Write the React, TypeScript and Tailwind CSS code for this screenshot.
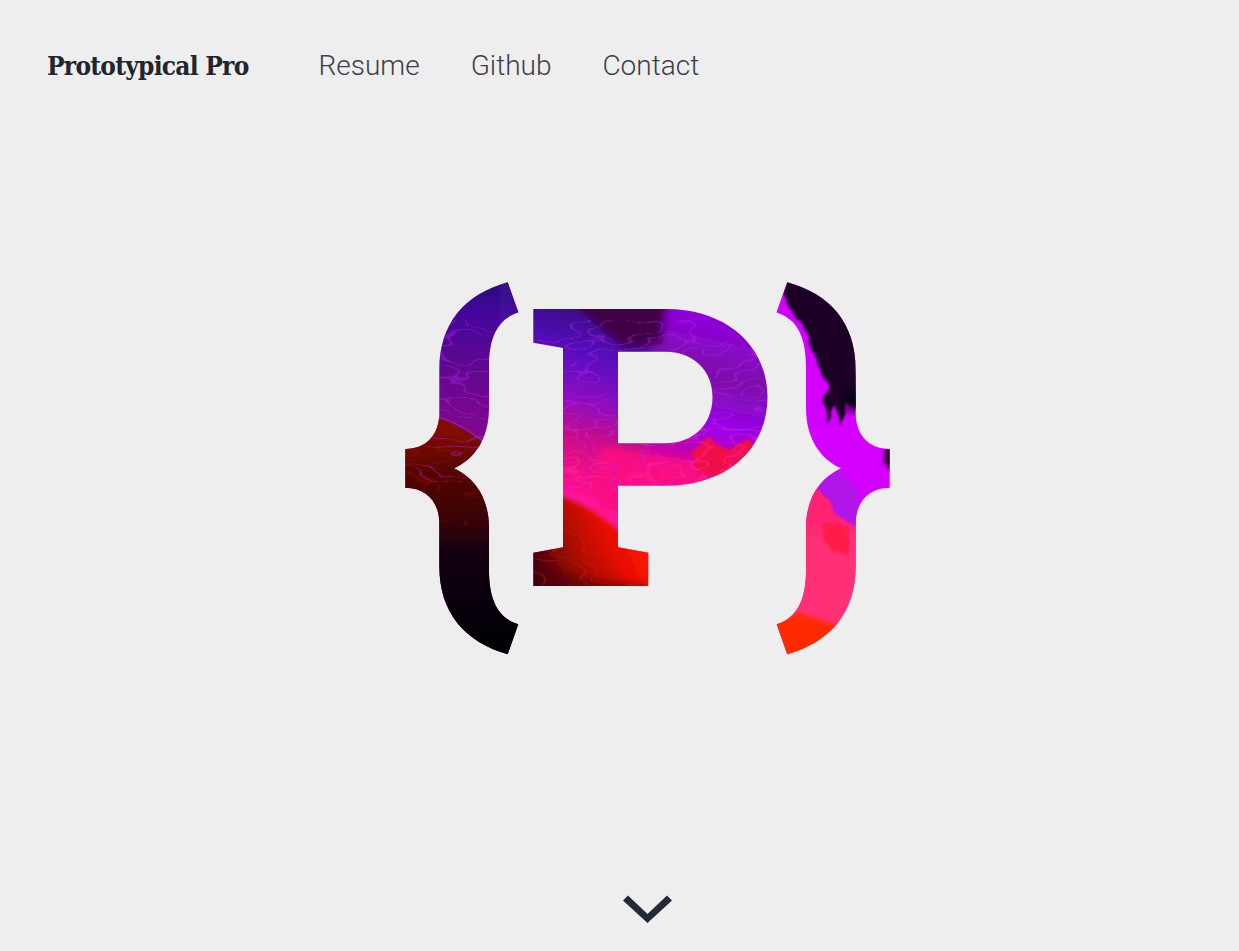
const navItems = ['Resume', 'Github', 'Contact'];

const leftBrace =
  'M507.7 282.3 L518.3 312.3 C498 319 489 337 489 367 L489 408 C489 438 475 459 454 468.3 C475 478 489 498 489 528 L489 570 C489 600 498 618 518.3 624.3 L507.7 654.3 C465 642 439.3 613 439.3 566 L439.3 523 C439.3 502 426 487.7 405.3 487.7 L405.3 449 C426 449 439.3 435 439.3 413.3 L439.3 370 C439.3 323 465 294 507.7 282.3 Z';
const rightBrace =
  'M787.3 282.3 L776.7 312.3 C797 319 806 337 806 367 L806 408 C806 438 820 459 841 468.3 C820 478 806 498 806 528 L806 570 C806 600 797 618 776.7 624.3 L787.3 654.3 C830 642 855.7 613 855.7 566 L855.7 523 C855.7 502 869 487.7 889.7 487.7 L889.7 449 C869 449 855.7 435 855.7 413.3 L855.7 370 C855.7 323 830 294 787.3 282.3 Z';
const letterP =
  'M533.3 309 L667 309 C725 309 767.5 345 767.5 397 C767.5 450 725 485.7 667 485.7 L618 485.7 L618 547.3 L648.3 552.7 L648.3 586 L533.3 586 L533.3 552.7 L563 547.3 L563 348 L533.3 342.7 Z M618 351.7 L618 443.3 L665 443.3 C693 443.3 712.5 425 712.5 397 C712.5 370 693 351.7 665 351.7 Z';

// alpha spikes at two noise levels, which turns the noise into thin contour lines
const veinTable = Array.from({ length: 61 }, (_, i) => (i === 25 || i === 33 ? 0.9 : 0)).join(' ');

function VeinFilter({ id, matrix, seed }: { id: string; matrix: string; seed: number }) {
  return (
    <filter id={id} x="0" y="0" width="100%" height="100%" colorInterpolationFilters="sRGB">
      <feTurbulence type="fractalNoise" baseFrequency="0.012 0.03" numOctaves="3" seed={seed} />
      <feColorMatrix type="matrix" values={matrix} />
      <feComponentTransfer>
        <feFuncA type="table" tableValues={veinTable} />
      </feComponentTransfer>
      <feGaussianBlur stdDeviation="0.4" />
    </filter>
  );
}

function MarbleLogo() {
  return (
    <svg viewBox="405 282 485 373" className="block h-[373px] w-[485px]">
      <defs>
        <clipPath id="logoClip">
          <path d={leftBrace} />
          <path d={rightBrace} />
          <path d={letterP} clipRule="evenodd" />
        </clipPath>
        <linearGradient id="braceTop" gradientUnits="userSpaceOnUse" x1="470" y1="282" x2="470" y2="440">
          <stop offset="0" stopColor="#241070" />
          <stop offset="0.18" stopColor="#42069c" />
          <stop offset="0.5" stopColor="#5c0890" />
          <stop offset="1" stopColor="#84088c" />
        </linearGradient>
        <linearGradient id="braceLow" gradientUnits="userSpaceOnUse" x1="450" y1="430" x2="450" y2="655">
          <stop offset="0" stopColor="#840c00" />
          <stop offset="0.2" stopColor="#520400" />
          <stop offset="0.38" stopColor="#3c0304" />
          <stop offset="0.55" stopColor="#140010" />
          <stop offset="0.8" stopColor="#06000a" />
          <stop offset="1" stopColor="#000000" />
        </linearGradient>
        <linearGradient id="stem" gradientUnits="userSpaceOnUse" x1="600" y1="320" x2="560" y2="510">
          <stop offset="0" stopColor="#3c1090" />
          <stop offset="0.2" stopColor="#5a08c0" />
          <stop offset="0.42" stopColor="#8c08c0" />
          <stop offset="0.62" stopColor="#c80888" />
          <stop offset="0.82" stopColor="#fa0c84" />
          <stop offset="1" stopColor="#ff18a4" />
        </linearGradient>
        <linearGradient id="pRed" gradientUnits="userSpaceOnUse" x1="535" y1="585" x2="640" y2="535">
          <stop offset="0" stopColor="#30000c" />
          <stop offset="0.4" stopColor="#a00a04" />
          <stop offset="0.75" stopColor="#e81000" />
          <stop offset="1" stopColor="#ff1400" />
        </linearGradient>
        <linearGradient id="bowl" gradientUnits="userSpaceOnUse" x1="700" y1="310" x2="660" y2="490">
          <stop offset="0" stopColor="#9000e0" />
          <stop offset="0.35" stopColor="#7c10a8" />
          <stop offset="0.6" stopColor="#9a00ec" />
          <stop offset="0.76" stopColor="#c004b0" />
          <stop offset="1" stopColor="#ff0c78" />
        </linearGradient>
        <linearGradient id="rightLow" gradientUnits="userSpaceOnUse" x1="830" y1="490" x2="830" y2="650">
          <stop offset="0" stopColor="#ff2070" />
          <stop offset="0.5" stopColor="#ff2c74" />
          <stop offset="1" stopColor="#ff3a80" />
        </linearGradient>
        <filter id="wobble" x="-20%" y="-20%" width="140%" height="140%">
          <feTurbulence type="fractalNoise" baseFrequency="0.03 0.05" numOctaves="2" seed="7" result="n" />
          <feDisplacementMap in="SourceGraphic" in2="n" scale="14" xChannelSelector="R" yChannelSelector="G" />
          <feGaussianBlur stdDeviation="1.2" />
        </filter>
        <filter id="soft" x="-30%" y="-30%" width="160%" height="160%">
          <feGaussianBlur stdDeviation="5" />
        </filter>
        <filter id="softer" x="-30%" y="-30%" width="160%" height="160%">
          <feGaussianBlur stdDeviation="2" />
        </filter>
        <VeinFilter id="veinsPurple" seed={11} matrix="0 0 0 0 0.78  0 0 0 0 0.15  0 0 0 0 1  1 0 0 0 0" />
        <VeinFilter id="veinsPink" seed={23} matrix="0 0 0 0 1  0 0 0 0 0.25  0 0 0 0 0.7  1 0 0 0 0" />
        <VeinFilter id="veinsRed" seed={5} matrix="0 0 0 0 0.95  0 0 0 0 0.12  0 0 0 0 0  1 0 0 0 0" />
      </defs>
      <g clipPath="url(#logoClip)">
        {/* left brace */}
        <rect x="400" y="280" width="125" height="380" fill="url(#braceTop)" />
        <path d="M400 425 L438 418 C455 424 470 432 490 448 L525 470 L525 660 L400 660 Z" fill="url(#braceLow)" />
        <path d="M438 417 C455 422 470 430 486 444" fill="none" stroke="#a030d0" strokeWidth="1" opacity="0.7" />

        {/* P stem and bowl */}
        <g filter="url(#soft)">
          <rect x="500" y="280" width="150" height="290" fill="url(#stem)" />
          <rect x="650" y="280" width="140" height="240" fill="url(#bowl)" />
          <path d="M600 446 L700 462 L720 510 L600 510 Z" fill="#fa0c80" />
          <path d="M565 298 L668 298 L662 344 L625 350 Z" fill="#400044" />
        </g>
        <path d="M690 448 L712 436 L728 450 L745 440 L760 452 L730 482 L700 470 Z" fill="#f01048" filter="url(#wobble)" />

        {/* fine marbling sits under the red area */}
        <rect x="405" y="320" width="363" height="170" filter="url(#veinsPurple)" opacity="0.45" />
        <rect x="530" y="420" width="230" height="70" filter="url(#veinsPink)" opacity="0.4" />

        <path d="M525 490 L563 497 C585 505 605 518 620 532 L660 535 L660 595 L525 595 Z" fill="url(#pRed)" filter="url(#softer)" />
        <path d="M530 568 L600 580 L650 586 L650 595 L530 595 Z" fill="#500410" opacity="0.55" filter="url(#soft)" />
        <rect x="405" y="445" width="90" height="80" filter="url(#veinsRed)" opacity="0.22" />
        <rect x="530" y="505" width="120" height="80" filter="url(#veinsRed)" opacity="0.4" />

        {/* right brace */}
        <rect x="770" y="280" width="125" height="260" fill="#d400ff" />
        <path d="M782 276 L858 276 L858 406 L846 402 L842 424 L834 406 L828 424 L822 402 L826 381 L812 346 L801 324 L786 306 Z" fill="#1e0028" filter="url(#wobble)" />
        <rect x="846" y="392" width="14" height="18" fill="#000008" filter="url(#soft)" />
        <path d="M893 448 L886 448 L884 462 L893 472 Z" fill="#180018" filter="url(#softer)" />
        <path d="M812 490 L825 476 L840 470 L858 490 L860 530 L812 500 Z" fill="#b018e8" filter="url(#softer)" />
        <path d="M770 660 L770 490 L818 488 L830 500 L832 510 L845 520 L860 528 L860 660 Z" fill="url(#rightLow)" filter="url(#wobble)" />
        <rect x="770" y="535" width="92" height="130" fill="#ff3078" />
        <path d="M820 522 L848 528 L848 552 L830 552 Z" fill="#ff1c48" filter="url(#wobble)" />
        <path d="M770 626 L797 613 C810 616 820 620 830 623 L850 628 L850 660 L770 660 Z" fill="#ff2a00" filter="url(#softer)" />
      </g>
    </svg>
  );
}

export default function App() {
  return (
    <div className="flex h-[951px] flex-col overflow-hidden bg-[#eeeeee]">
      <header className="flex h-[130px] items-center pl-[47px] pt-[2px]">
        <a className="text-[26px] font-bold text-[#21252f] [font-family:'DejaVu_Serif_Condensed','DejaVu_Serif',serif] tracking-[-0.75px]">
          Prototypical Pro
        </a>
        <nav className="ml-[70px] flex items-center gap-[51px] text-[28px] font-light text-[#3b4048] [font-family:Roboto,sans-serif]">
          {navItems.map((item) => (
            <a key={item}>{item}</a>
          ))}
        </nav>
      </header>

      <main className="flex flex-1 flex-col items-center pl-14 pt-[152px]">
        <MarbleLogo />
        <svg viewBox="0 0 49 28" className="mt-[240px] h-7 w-[49px]">
          <path d="M0 5.5 L5 0.5 L24.5 19 L44 0.5 L49 5.5 L24.5 28 Z" fill="#232a35" />
        </svg>
      </main>
    </div>
  );
}
